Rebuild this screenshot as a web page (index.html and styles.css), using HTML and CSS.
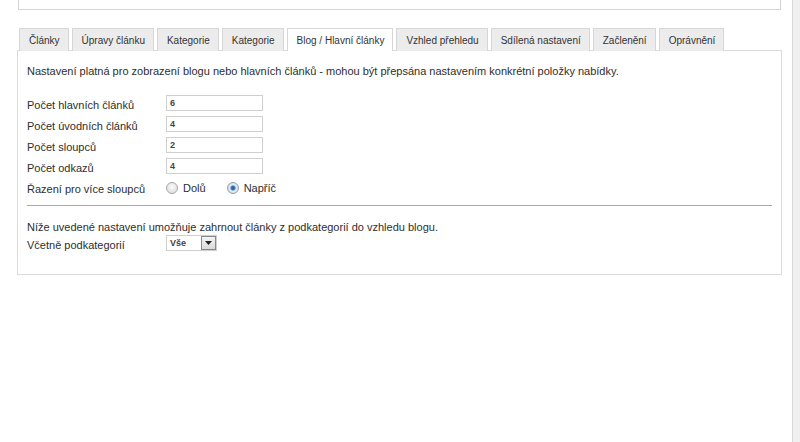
FILE: index.html
```html
<!DOCTYPE html>
<html lang="cs">
<head>
<meta charset="utf-8">
<link rel="stylesheet" href="styles.css">
</head>
<body>
<div class="page">
  <div class="main">
    <div class="topbox"></div>
    <div class="tabs">
      <div class="tab">Články</div>
      <div class="tab">Úpravy článku</div>
      <div class="tab">Kategorie</div>
      <div class="tab">Kategorie</div>
      <div class="tab active">Blog / Hlavní články</div>
      <div class="tab">Vzhled přehledu</div>
      <div class="tab">Sdílená nastavení</div>
      <div class="tab">Začlenění</div>
      <div class="tab">Oprávnění</div>
    </div>
    <div class="panel">
      <p class="desc">Nastavení platná pro zobrazení blogu nebo hlavních článků - mohou být přepsána nastavením konkrétní položky nabídky.</p>
      <div class="rows">
        <div class="row"><span class="label">Počet hlavních článků</span><span class="input">6</span></div>
        <div class="row"><span class="label">Počet úvodních článků</span><span class="input">4</span></div>
        <div class="row"><span class="label">Počet sloupců</span><span class="input">2</span></div>
        <div class="row"><span class="label">Počet odkazů</span><span class="input">4</span></div>
        <div class="row"><span class="label">Řazení pro více sloupců</span>
          <span class="radios">
            <span class="radio"></span><span class="rlabel">Dolů</span>
            <span class="radio checked"></span><span class="rlabel">Napříč</span>
          </span>
        </div>
      </div>
      <hr class="sep">
      <p class="desc2">Níže uvedené nastavení umožňuje zahrnout články z podkategorií do vzhledu blogu.</p>
      <div class="row sel-row"><span class="label">Včetně podkategorií</span>
        <span class="select"><span class="sval">Vše</span><span class="sbtn"><svg width="7" height="4" viewBox="0 0 7 4"><path d="M0 0h7L3.5 4z" fill="#222"/></svg></span></span>
      </div>
    </div>
  </div>
  <div class="strip"></div>
</div>
</body>
</html>
```

FILE: styles.css
```css
* { box-sizing: border-box; }
html, body { margin: 0; padding: 0; background: #fff; }
body {
  font-family: "Liberation Sans", Arial, sans-serif;
  font-size: 11px;
  color: #2e2e2e;
  height: 442px;
  overflow: hidden;
}
.page { display: flex; height: 442px; }
.main { width: 792px; padding: 0 10px 0 17px; }
.strip { width: 8px; background: #f0f0f0; border-left: 1px solid #d8d8d8; }
.topbox {
  margin: 0 1px;
  height: 10px;
  border: 1px solid #d4d4d4;
  border-top: none;
}
.tabs {
  display: flex;
  gap: 3px;
  margin-top: 18px;
  padding-left: 2px;
  position: relative;
  z-index: 1;
}
.tab {
  height: 23px;
  padding: 6px 8px 0 9px;
  font-size: 10px;
  color: #333;
  background: #ececec;
  border: 1px solid #d6d6d6;
  border-bottom: none;
  white-space: nowrap;
}
.tab.active { background: #fff; }
.panel {
  margin-top: -1px;
  border: 1px solid #dcdcdc;
  height: 225px;
  padding: 13px 9px 0 9px;
}
.desc { margin: 0 0 17px; line-height: 14px; }
.rows { display: flex; flex-direction: column; gap: 5px; }
.row { display: flex; align-items: center; height: 16px; }
.label { width: 139px; line-height: 14px; padding-top: 3px; }
.input {
  width: 97px;
  height: 16px;
  border: 1px solid #cfcfcf;
  font-size: 9px;
  font-weight: bold;
  color: #444;
  padding: 1px 0 0 3px;
  line-height: 12px;
}
.radios { display: flex; align-items: center; }
.radio {
  width: 12px; height: 12px; border-radius: 50%;
  border: 1px solid #a8a8a8;
  background: radial-gradient(circle at 50% 40%, #fafafa, #d8d8d8);
  margin-right: 5px;
  margin-top: 1px;
}
.radio.checked {
  background: radial-gradient(circle, #1e4f8a 0, #3f7fc4 2px, #e9eef4 3.2px, #d4d4d4 6px);
  border-color: #8aa0b8;
}
.rlabel { margin-right: 21px; padding-top: 2px; }
.sep {
  margin: 10px 0 0;
  border: none;
  border-top: 1px solid #a9a9a9;
  height: 0;
}
.desc2 { margin: 14px 0 0; line-height: 14px; }
.sel-row { margin-top: 1px; }
.select {
  display: flex;
  width: 51px;
  height: 16px;
  border: 1px solid #cfcfcf;
}
.sval { flex: 1; font-size: 9px; font-weight: bold; color: #444; padding: 1px 0 0 3px; line-height: 12px; }
.sbtn {
  width: 15px;
  border: 1px solid #888;
  background: linear-gradient(#f4f4f4, #d9d9d9);
  display: flex; align-items: center; justify-content: center;
}
```
